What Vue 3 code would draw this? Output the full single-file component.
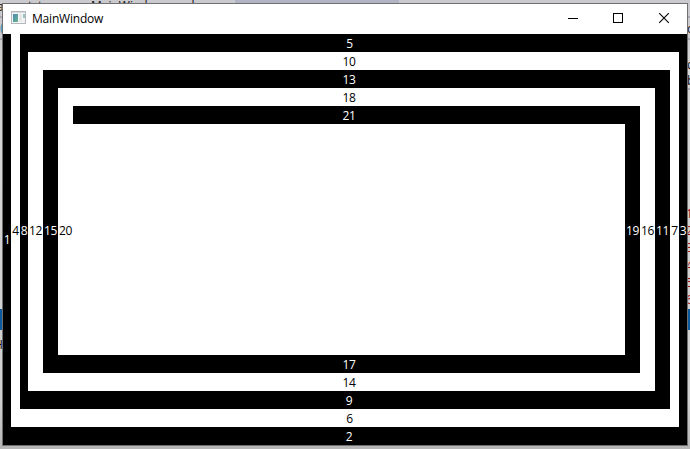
<script setup>
const labels = [
  // number, column start/end, row start/end
  [1, 1, 2, 1, 12],
  [2, 2, 13, 11, 12],
  [3, 12, 13, 1, 11],
  [4, 2, 3, 1, 11],
  [5, 3, 12, 1, 2],
  [6, 3, 12, 10, 11],
  [7, 11, 12, 2, 10],
  [8, 3, 4, 2, 10],
  [9, 4, 11, 9, 10],
  [10, 4, 11, 2, 3],
  [11, 10, 11, 3, 9],
  [12, 4, 5, 3, 9],
  [13, 5, 10, 3, 4],
  [14, 5, 10, 8, 9],
  [15, 5, 6, 4, 8],
  [16, 9, 10, 4, 8],
  [17, 6, 9, 7, 8],
  [18, 6, 9, 4, 5],
  [19, 8, 9, 5, 7],
  [20, 6, 7, 5, 7],
  [21, 7, 8, 5, 6],
]
const dark = new Set([1, 2, 3, 5, 8, 9, 11, 13, 15, 17, 19, 21])
const area = ([, c1, c2, r1, r2]) => ({ gridArea: `${r1} / ${c1} / ${r2} / ${c2}` })
const isRow = ([, , , r1, r2]) => r2 - r1 === 1
const lineNumbers = [1, 2, 3, 4, 5, 6]
</script>

<template>
  <div class="desktop">
    <div class="tabstrip"></div>
    <div class="rule rule-1"></div>
    <div class="rule rule-2"></div>
    <div class="rule rule-3"></div>
    <div class="band band-left"></div>
    <div class="band band-right"></div>
    <span class="peek peek-a">a</span>
    <span class="peek peek-t1">t</span>
    <span class="peek peek-t2">t</span>
    <span class="peek peek-title">MainWindow.xaml.cs</span>
    <span class="peek peek-paren">(</span>
    <span class="peek peek-p">o</span>
    <span class="peek peek-d">d</span>
    <span class="peek peek-b">b</span>
    <span class="peek peek-h">H</span>
    <div class="gutter"><span v-for="n in lineNumbers" :key="n">{{ n }}</span></div>

    <div class="window">
      <header class="titlebar">
        <svg class="app-icon" width="16" height="16" viewBox="0 0 16 16" shape-rendering="crispEdges">
          <defs>
            <linearGradient id="pane" x1="0" y1="0" x2="1" y2="1">
              <stop offset="0" stop-color="#4c88b5" />
              <stop offset="1" stop-color="#67b58c" />
            </linearGradient>
          </defs>
          <rect x="0.5" y="0.5" width="14" height="12" fill="#f5f6f7" stroke="#b4b8bc" />
          <rect x="1" y="1" width="13" height="1" fill="#d8dcdf" />
          <rect x="2" y="3" width="5" height="8" fill="url(#pane)" />
          <rect x="8" y="3" width="3" height="8" fill="#e5e7e9" />
          <rect x="12" y="3" width="2" height="4" fill="#9dc4c2" />
          <rect x="12" y="7" width="2" height="4" fill="#eef0ef" />
        </svg>
        <span class="title">MainWindow</span>
        <div class="controls">
          <svg width="45" height="30" viewBox="0 0 45 30"><path d="M17 14.5h10" stroke="#000" fill="none" /></svg>
          <svg width="45" height="30" viewBox="0 0 45 30"><rect x="17.5" y="9.5" width="9" height="9" stroke="#000" fill="none" /></svg>
          <svg width="46" height="30" viewBox="0 0 46 30"><path d="M18.2 9.2l9.6 9.6M27.8 9.2l-9.6 9.6" stroke="#000" stroke-width="1.1" fill="none" /></svg>
        </div>
      </header>
      <main class="dock">
        <div
          v-for="l in labels"
          :key="l[0]"
          class="cell"
          :class="{ dark: dark.has(l[0]), row: isRow(l) }"
          :style="area(l)"
        >
          <span>{{ l[0] }}</span>
        </div>
      </main>
    </div>
  </div>
</template>

<style>
body { overflow: hidden; }
</style>

<style scoped>
.desktop {
  position: relative;
  box-sizing: border-box;
  width: 690px;
  height: 449px;
  padding: 3px 2px;
  overflow: hidden;
  background: linear-gradient(#c9c9ce 0, #cdcdd0 40px, #d6d6d6 70px, #cfcfcf 400px, #b5b5b5 449px);
  font-family: "Open Sans", "Noto Sans", sans-serif;
  font-size: 12px;
}
.tabstrip { position: absolute; left: 235px; top: 0; width: 164px; height: 4px; background: #b2b3c3; }
.peek { position: absolute; line-height: 16px; color: #111; white-space: nowrap; }
.peek-a { left: -3px; top: -1px; }
.peek-t1 { left: 28px; top: -2px; }
.peek-t2 { left: 38px; top: -2px; }
.peek-title { left: 91px; top: -2px; }
.peek-paren { left: 0; top: 20px; color: #2b91af; }
.peek-p { left: 687px; top: 21px; }
.peek-d { left: 687px; top: 57px; }
.peek-b { left: 687px; top: 73px; }
.peek-h { left: -6px; top: 337px; }
.band { position: absolute; top: 309px; width: 3px; height: 21px; background: #0b5a9d; }
.band-left { left: 0; }
.band-right { left: 687px; }
.rule { position: absolute; left: 0; width: 690px; height: 2px; background: #aaaab4; }
.rule-1 { top: 16px; }
.rule-2 { top: 38px; }
.rule-3 { top: 88px; left: 687px; }
.gutter {
  position: absolute;
  left: 686px;
  top: 205px;
  display: flex;
  flex-direction: column;
  line-height: 17.2px;
  color: #a31515;
}
.window {
  position: relative;
  box-sizing: border-box;
  display: flex;
  flex-direction: column;
  width: 686px;
  height: 443px;
  border: 1px solid #707073;
  background: #fff;
}
.titlebar { display: flex; flex: none; align-items: center; height: 30px; padding-left: 8px; }
.app-icon { flex: none; }
.title { margin-left: 5px; line-height: 16px; letter-spacing: -0.2px; color: #000; }
.controls { display: flex; margin-left: auto; }
.controls svg { display: block; }
.dock {
  display: grid;
  flex: 1;
  min-height: 0;
  grid-template-columns: 8px 9px 8px 15px 15px 15px 1fr 15px 15px 15px 9px 8px;
  grid-template-rows: repeat(5, 18px) 1fr repeat(5, 18px);
}
.cell {
  box-sizing: border-box;
  display: flex;
  align-items: center;
  justify-content: center;
  min-width: 0;
  min-height: 0;
  background: #fff;
  color: #000;
  line-height: 16px;
  letter-spacing: -0.3px;
}
.row { padding-top: 2px; }
.dark { background: #000; color: #fff; }
</style>
